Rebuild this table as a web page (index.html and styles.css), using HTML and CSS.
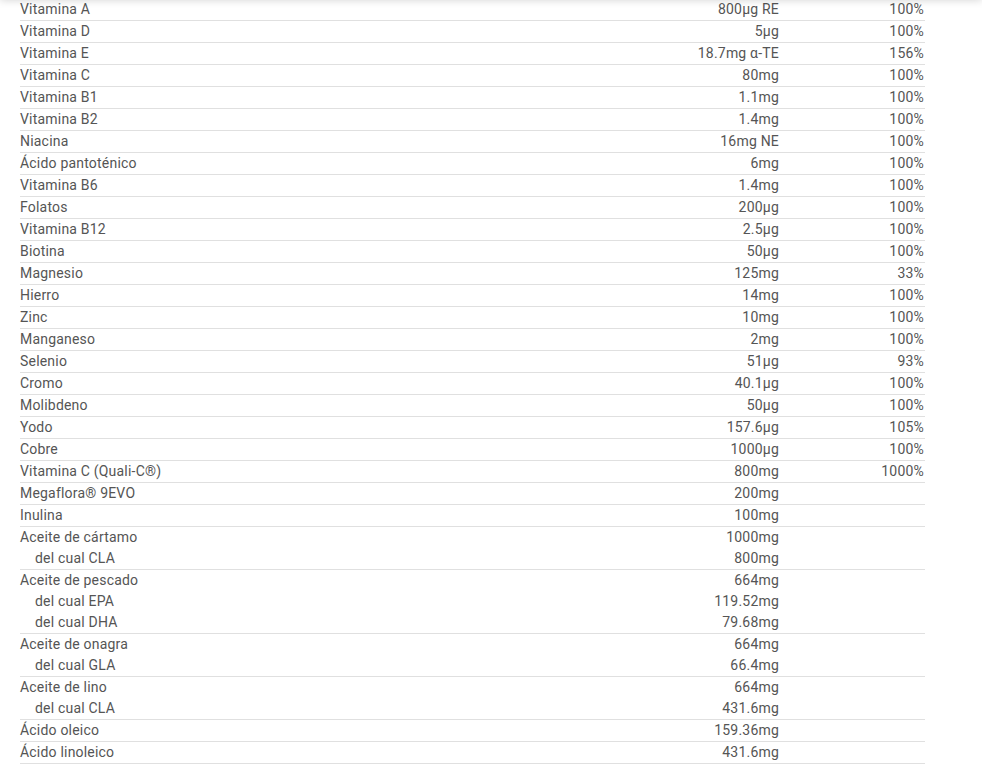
FILE: index.html
```html
<!DOCTYPE html>
<html lang="es">
<head>
<meta charset="utf-8">
<title>Información nutricional</title>
<link rel="stylesheet" href="styles.css">
</head>
<body>
<div class="topshade"></div>
<div class="table">
  <div class="row"><div class="line"><span>Vitamina A</span><span class="amt">800µg RE</span><span class="pct">100%</span></div></div>
  <div class="row"><div class="line"><span>Vitamina D</span><span class="amt">5µg</span><span class="pct">100%</span></div></div>
  <div class="row"><div class="line"><span>Vitamina E</span><span class="amt">18.7mg α-TE</span><span class="pct">156%</span></div></div>
  <div class="row"><div class="line"><span>Vitamina C</span><span class="amt">80mg</span><span class="pct">100%</span></div></div>
  <div class="row"><div class="line"><span>Vitamina B1</span><span class="amt">1.1mg</span><span class="pct">100%</span></div></div>
  <div class="row"><div class="line"><span>Vitamina B2</span><span class="amt">1.4mg</span><span class="pct">100%</span></div></div>
  <div class="row"><div class="line"><span>Niacina</span><span class="amt">16mg NE</span><span class="pct">100%</span></div></div>
  <div class="row"><div class="line"><span>Ácido pantoténico</span><span class="amt">6mg</span><span class="pct">100%</span></div></div>
  <div class="row"><div class="line"><span>Vitamina B6</span><span class="amt">1.4mg</span><span class="pct">100%</span></div></div>
  <div class="row"><div class="line"><span>Folatos</span><span class="amt">200µg</span><span class="pct">100%</span></div></div>
  <div class="row"><div class="line"><span>Vitamina B12</span><span class="amt">2.5µg</span><span class="pct">100%</span></div></div>
  <div class="row"><div class="line"><span>Biotina</span><span class="amt">50µg</span><span class="pct">100%</span></div></div>
  <div class="row"><div class="line"><span>Magnesio</span><span class="amt">125mg</span><span class="pct">33%</span></div></div>
  <div class="row"><div class="line"><span>Hierro</span><span class="amt">14mg</span><span class="pct">100%</span></div></div>
  <div class="row"><div class="line"><span>Zinc</span><span class="amt">10mg</span><span class="pct">100%</span></div></div>
  <div class="row"><div class="line"><span>Manganeso</span><span class="amt">2mg</span><span class="pct">100%</span></div></div>
  <div class="row"><div class="line"><span>Selenio</span><span class="amt">51µg</span><span class="pct">93%</span></div></div>
  <div class="row"><div class="line"><span>Cromo</span><span class="amt">40.1µg</span><span class="pct">100%</span></div></div>
  <div class="row"><div class="line"><span>Molibdeno</span><span class="amt">50µg</span><span class="pct">100%</span></div></div>
  <div class="row"><div class="line"><span>Yodo</span><span class="amt">157.6µg</span><span class="pct">105%</span></div></div>
  <div class="row"><div class="line"><span>Cobre</span><span class="amt">1000µg</span><span class="pct">100%</span></div></div>
  <div class="row"><div class="line"><span>Vitamina C (Quali-C®)</span><span class="amt">800mg</span><span class="pct">1000%</span></div></div>
  <div class="row"><div class="line"><span>Megaflora® 9EVO</span><span class="amt">200mg</span><span class="pct"></span></div></div>
  <div class="row"><div class="line"><span>Inulina</span><span class="amt">100mg</span><span class="pct"></span></div></div>
  <div class="row">
    <div class="line"><span>Aceite de cártamo</span><span class="amt">1000mg</span><span class="pct"></span></div>
    <div class="line sub"><span>del cual CLA</span><span class="amt">800mg</span><span class="pct"></span></div>
  </div>
  <div class="row">
    <div class="line"><span>Aceite de pescado</span><span class="amt">664mg</span><span class="pct"></span></div>
    <div class="line sub"><span>del cual EPA</span><span class="amt">119.52mg</span><span class="pct"></span></div>
    <div class="line sub"><span>del cual DHA</span><span class="amt">79.68mg</span><span class="pct"></span></div>
  </div>
  <div class="row">
    <div class="line"><span>Aceite de onagra</span><span class="amt">664mg</span><span class="pct"></span></div>
    <div class="line sub"><span>del cual GLA</span><span class="amt">66.4mg</span><span class="pct"></span></div>
  </div>
  <div class="row">
    <div class="line"><span>Aceite de lino</span><span class="amt">664mg</span><span class="pct"></span></div>
    <div class="line sub"><span>del cual CLA</span><span class="amt">431.6mg</span><span class="pct"></span></div>
  </div>
  <div class="row"><div class="line"><span>Ácido oleico</span><span class="amt">159.36mg</span><span class="pct"></span></div></div>
  <div class="row"><div class="line"><span>Ácido linoleico</span><span class="amt">431.6mg</span><span class="pct"></span></div></div>
</div>
</body>
</html>
```
FILE: styles.css
```css
html, body {
  margin: 0;
  padding: 0;
  background: #fff;
}
body {
  font-family: Roboto, "Liberation Sans", Arial, sans-serif;
  font-size: 14px;
  letter-spacing: 0.2px;
  color: #555;
}
.topshade {
  position: fixed;
  top: -10px;
  left: 0;
  right: 0;
  height: 10px;
  box-shadow: 0 0 8px rgba(0, 0, 0, 0.18);
  background: #fff;
}
.table {
  margin: -1px 57px 0 20px;
  display: flex;
  flex-direction: column;
}
.row {
  border-bottom: 1px solid #e0e0e0;
  display: flex;
  flex-direction: column;
}
.line {
  display: grid;
  grid-template-columns: 1fr 200px 146px;
  height: 21px;
  line-height: 21px;
  white-space: nowrap;
}
.amt, .pct {
  text-align: right;
}
.amt {
  padding-right: 0;
}
.pct {
  padding-right: 1px;
}
.sub span:first-child {
  padding-left: 15px;
}
```
